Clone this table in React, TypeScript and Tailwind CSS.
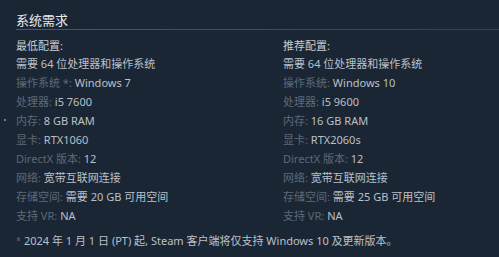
const font = "font-['Noto_Sans','Noto_Sans_CJK_SC',sans-serif]";

type Req = { label: string; value: string };

const minReqs: Req[] = [
  { label: "操作系统 *:", value: "Windows 7" },
  { label: "处理器:", value: "i5 7600" },
  { label: "内存:", value: "8 GB RAM" },
  { label: "显卡:", value: "RTX1060" },
  { label: "DirectX 版本:", value: "12" },
  { label: "网络:", value: "宽带互联网连接" },
  { label: "存储空间:", value: "需要 20 GB 可用空间" },
  { label: "支持 VR:", value: "NA" },
];

const recReqs: Req[] = [
  { label: "操作系统:", value: "Windows 10" },
  { label: "处理器:", value: "i5 9600" },
  { label: "内存:", value: "16 GB RAM" },
  { label: "显卡:", value: "RTX2060s" },
  { label: "DirectX 版本:", value: "12" },
  { label: "网络:", value: "宽带互联网连接" },
  { label: "存储空间:", value: "需要 25 GB 可用空间" },
  { label: "支持 VR:", value: "NA" },
];

const Column = ({ title, reqs }: { title: string; reqs: Req[] }) => {
  return (
    <div className="flex flex-col text-[11px]">
      <div className="leading-[17px] text-[#c6ccd2]">{title}</div>
      <div className="leading-[19px] text-[#b9c0c8]">需要 64 位处理器和操作系统</div>
      {reqs.map((r) => (
        <div key={r.label} className="leading-[19px] whitespace-nowrap">
          <span className="text-[#5d6977]">{r.label}</span>{" "}
          <span className="text-[#b9c0c8]">{r.value}</span>
        </div>
      ))}
    </div>
  );
};

export default function App() {
  return (
    <div className={`relative w-[499px] h-[257px] bg-[#1b2635] ${font} overflow-hidden`}>
      <span className="absolute left-[4px] top-[119px] w-[2px] h-[2px] rounded-full bg-[#8a96a3]" />
      <div className="pl-4 pt-[11px]">
        <div className="text-[13px] leading-[18px] text-[#e6eaee]">系统需求</div>
        <div className="h-px bg-gradient-to-r from-[#3f5b73] to-[#2c4256]" />
      </div>
      <div className="grid grid-cols-[267px_1fr] pl-4 mt-[7px]">
        <Column title="最低配置:" reqs={minReqs} />
        <Column title="推荐配置:" reqs={recReqs} />
      </div>
      <div className="pl-4 mt-[6px] text-[11px] leading-[19px] whitespace-nowrap">
        <span className="text-[#5d6977] text-[9px] align-top">*</span>
        <span className="text-[#b9c0c8] ml-[3px]">
          2024 年 1 月 1 日 (PT) 起, Steam 客户端将仅支持 Windows 10 及更新版本。
        </span>
      </div>
    </div>
  );
}
